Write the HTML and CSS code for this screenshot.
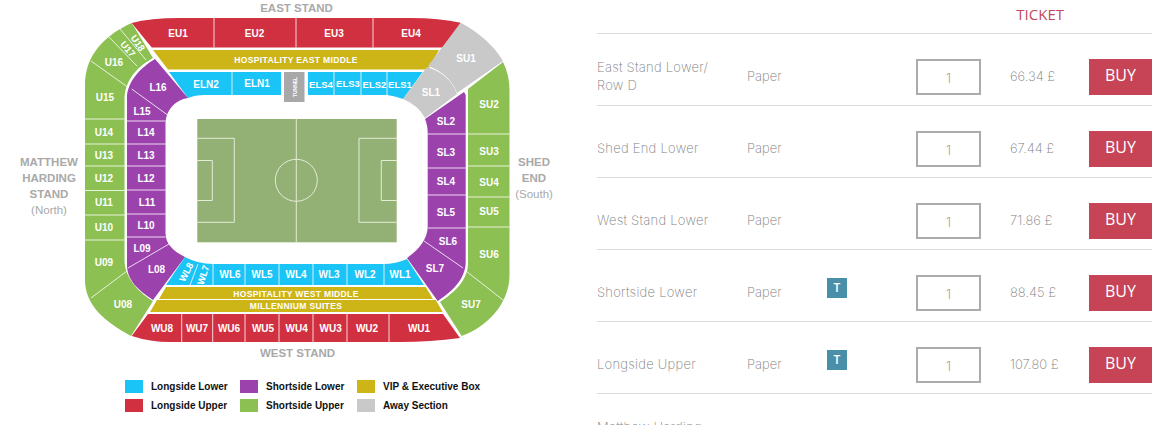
FILE: index.html
```html
<!DOCTYPE html>
<html lang="en">
<head>
<meta charset="utf-8">
<title>Stadium tickets</title>
<link rel="stylesheet" href="styles.css">
</head>
<body>
<div class="page">
  <section class="map-col">
    <svg class="map" width="580" height="375" viewBox="0 0 580 375" xmlns="http://www.w3.org/2000/svg">
      <path class="red" d="M131.7 23Q150 18 180 18L410 18Q440 18 460.7 22.7L443 47.5L151.7 47.5Z"/>
      <path class="gold" d="M153 50L439 50L428 69.5L168 69.5Z"/>
      <path class="blue" d="M169 72L281 72L281 95L205 95Q195 95 188 98Z"/>
      <rect class="tunnel" x="284" y="72" width="20.5" height="30"/>
      <path class="blue" d="M308 72L422.7 72L403 99Q395 96 387 95L308 95Z"/>
      <path class="green" d="M131.7 23C105 35 85 55 85 85L85 280C85 305 105 322 131 336L153 301C135 290 124.5 275 124.5 260L124.5 100C124.5 82 135 68 153 58Z"/>
      <path class="purple" d="M155 59L188 98C175 100 165.5 110 165.5 125L165.5 233C165.5 245 175 252 185 257L153 300C138 290 127 280 127 265L127 98C127 82 140 68 155 59Z"/>
      <path class="grey" d="M460.7 22.7C480 33 495 47 503 61L457 93Q450 74 428 66Z"/>
      <path class="grey" d="M427 67Q450 74 457 94L425 118Q418 105 403 99Z"/>
      <path class="purple" d="M464 92L465.7 95L465.7 262C465.7 280 450 293 437.7 301L407 258C418 250 427.7 240 427.7 226L427.7 134Q427.7 125 425 119Z"/>
      <path class="green" d="M503 62Q509.5 75 509.5 90L509.5 275C509.5 305 485 328 461.7 336L440 302C455 292 468 280 468 263L468 89Z"/>
      <path class="blue" d="M185 257Q198 264 213 264L383 264Q396 264 407 259L424 285L166 285Z"/>
      <path class="gold" d="M166 287L425.7 287L433 299L159 299Z"/>
      <path class="gold" d="M157 300L435.7 300L442.7 312L150 312Z"/>
      <path class="red" d="M148 314L443 314L460 338Q430 342 400 342L170 342Q150 342 131.7 336Z"/>

      <rect class="pitch" x="197.3" y="119" width="199.4" height="123.3"/>
      <g class="lines">
        <path d="M296.3 119V242.3"/>
        <circle cx="296.3" cy="180.3" r="21"/>
        <path d="M197.3 138.3H234.3V222.3H197.3"/>
        <path d="M197.3 160.5H212.3V200.5H197.3"/>
        <path d="M396.7 138.3H359V222.3H396.7"/>
        <path d="M396.7 160.5H381.3V200.5H396.7"/>
      </g>

      <path class="cuts" d="M214 18V47.5M296 18V47.5M373 18V47.5M232 72V95M334 72V95M361 72V95M387 72V95M120 29L146 60M108 36L137 66M91 61L129 88M85 119H124.5M85 144H124.5M85 166H124.5M85 190.5H124.5M85 215H124.5M85 240H124.5M91 298L127 271M131.7 89L169 116M127 121H165.5M127 144H165.5M127 166H165.5M127 190H165.5M127 214H165.5M127 237H165.5M128 268L169 244M427.7 134H465.7M427.7 168H465.7M427.7 195H465.7M427.7 228H465.7M424 241L463 268M468 134H509.5M468 166H509.5M468 197H509.5M468 227H509.5M466 271L503 300M198 264L190 285M213 264V285M245 264V285M279 264V285M313 264V285M347 264V285M384 264V285M181.7 314V342M212.7 314V342M245 314V342M279 314V342M313 314V342M347 314V342M389 314V342"/>

      <g class="seat">
        <text x="178" y="33">EU1</text><text x="254.5" y="33">EU2</text><text x="334" y="33">EU3</text><text x="411" y="33">EU4</text>
        <text x="206" y="84">ELN2</text><text x="257" y="83.5">ELN1</text>
        <text x="321" y="84" class="tight">ELS4</text><text x="348" y="83.5" class="tight">ELS3</text><text x="374.5" y="84" class="tight">ELS2</text><text x="400" y="84" class="tight">ELS1</text>
        <text x="114" y="62">U16</text><text x="105" y="97">U15</text><text x="104" y="132.5">U14</text><text x="104" y="155">U13</text><text x="104" y="178">U12</text><text x="104" y="202">U11</text><text x="104" y="227">U10</text><text x="104" y="262">U09</text><text x="123" y="304">U08</text>
        <text x="128" y="49" transform="rotate(50 128 49)" class="tight">U17</text><text x="138" y="43" transform="rotate(55 138 43)" class="tight">U18</text>
        <text x="158" y="87.5">L16</text><text x="142" y="111">L15</text><text x="146" y="132.5">L14</text><text x="146" y="155">L13</text><text x="146" y="178">L12</text><text x="147" y="202">L11</text><text x="146" y="225">L10</text><text x="142" y="248">L09</text><text x="156.5" y="269">L08</text>
        <text x="431" y="92">SL1</text><text x="446" y="121">SL2</text><text x="446" y="152">SL3</text><text x="446" y="181">SL4</text><text x="446" y="212">SL5</text><text x="448" y="241">SL6</text><text x="435" y="268">SL7</text>
        <text x="466" y="58">SU1</text><text x="489" y="104">SU2</text><text x="489" y="151">SU3</text><text x="489" y="182">SU4</text><text x="489" y="211">SU5</text><text x="489" y="254">SU6</text><text x="471" y="304">SU7</text>
        <text x="186" y="272" transform="rotate(-62 186 272)" class="tight">WL8</text><text x="203" y="275" transform="rotate(-72 203 275)" class="tight">WL7</text>
        <text x="230" y="274">WL6</text><text x="262" y="274">WL5</text><text x="296" y="274">WL4</text><text x="329" y="274">WL3</text><text x="365" y="274">WL2</text><text x="400" y="274">WL1</text>
        <text x="162" y="328.5">WU8</text><text x="197" y="328.5">WU7</text><text x="229" y="328.5">WU6</text><text x="263" y="328.5">WU5</text><text x="296.7" y="328.5">WU4</text><text x="330.7" y="328.5">WU3</text><text x="367" y="328.5">WU2</text><text x="419" y="328.5">WU1</text>
      </g>
      <g class="band">
        <text x="296" y="60">HOSPITALITY EAST MIDDLE</text>
        <text x="296" y="293.5">HOSPITALITY WEST MIDDLE</text>
        <text x="296" y="306">MILLENNIUM SUITES</text>
      </g>
      <text class="tunnel-label" x="294.5" y="87" transform="rotate(-90 294.5 87)">TUNNEL</text>
      <g class="stand">
        <text x="296.5" y="8">EAST STAND</text>
        <text x="297.5" y="353">WEST STAND</text>
        <text x="49" y="162">MATTHEW</text>
        <text x="49" y="178">HARDING</text>
        <text x="49" y="194">STAND</text>
        <text x="49" y="210" class="sub">(North)</text>
        <text x="534" y="162">SHED</text>
        <text x="534" y="178">END</text>
        <text x="534" y="194" class="sub">(South)</text>
      </g>
    </svg>
    <div class="legend">
      <div class="key"><span class="swatch s-blue"></span>Longside Lower</div>
      <div class="key"><span class="swatch s-purple"></span>Shortside Lower</div>
      <div class="key"><span class="swatch s-gold"></span>VIP &amp; Executive Box</div>
      <div class="key"><span class="swatch s-red"></span>Longside Upper</div>
      <div class="key"><span class="swatch s-green"></span>Shortside Upper</div>
      <div class="key"><span class="swatch s-grey"></span>Away Section</div>
    </div>
  </section>

  <section class="tickets">
    <div class="head"><span class="head-title">TICKET</span></div>
    <div class="row">
      <div class="name">East Stand Lower/ Row D</div><div class="type">Paper</div><div></div>
      <div class="qty">1</div><div class="price">66.34 £</div><a class="buy">BUY</a>
    </div>
    <div class="row">
      <div class="name">Shed End Lower</div><div class="type">Paper</div><div></div>
      <div class="qty">1</div><div class="price">67.44 £</div><a class="buy">BUY</a>
    </div>
    <div class="row">
      <div class="name">West Stand Lower</div><div class="type">Paper</div><div></div>
      <div class="qty">1</div><div class="price">71.86 £</div><a class="buy">BUY</a>
    </div>
    <div class="row">
      <div class="name">Shortside Lower</div><div class="type">Paper</div><div><span class="badge">T</span></div>
      <div class="qty">1</div><div class="price">88.45 £</div><a class="buy">BUY</a>
    </div>
    <div class="row">
      <div class="name">Longside Upper</div><div class="type">Paper</div><div><span class="badge">T</span></div>
      <div class="qty">1</div><div class="price">107.80 £</div><a class="buy">BUY</a>
    </div>
    <div class="row">
      <div class="name">Matthew Harding Lower</div>
    </div>
  </section>
</div>
</body>
</html>
```
FILE: styles.css
```css
html, body {
  margin: 0;
  height: 425px;
  overflow: hidden;
  background: #fff;
}
.page {
  display: flex;
  width: 1171px;
  height: 425px;
  overflow: hidden;
}
.map-col {
  flex: 0 0 597px;
  font-family: "Liberation Sans", Arial, sans-serif;
}
.map { display: block; }

.red { fill: #d13040; }
.gold { fill: #cdb417; }
.blue { fill: #1bc4f6; }
.green { fill: #8cc052; }
.purple { fill: #9c42ad; }
.grey { fill: #c9c9c9; }
.tunnel { fill: #a8a8a8; }
.pitch { fill: #94b175; }
.lines path, .lines circle {
  fill: none;
  stroke: #e4ecd6;
  stroke-width: 1;
}
.cuts {
  fill: none;
  stroke: #fff;
  stroke-width: 1;
  opacity: 0.8;
}
.seat text, .band text, .tunnel-label, .stand text {
  text-anchor: middle;
  dominant-baseline: central;
  font-family: "Liberation Sans", Arial, sans-serif;
  font-weight: 700;
}
.seat text { fill: #fff; font-size: 10px; }
.seat .tight { font-size: 9.5px; }
.band text { fill: #fff; font-size: 8.5px; letter-spacing: 0.35px; }
.tunnel-label { fill: #fff; font-size: 5px; }
.stand text { fill: #a9a9a9; font-size: 11.5px; }
.stand .sub { font-weight: 400; font-size: 11.5px; }

.legend {
  display: grid;
  grid-template-columns: 115px 117px auto;
  row-gap: 6px;
  margin: 5px 0 0 125px;
}
.key {
  display: flex;
  align-items: center;
  font-size: 10px;
  font-weight: 700;
  color: #111;
  height: 13px;
}
.swatch {
  flex: 0 0 18px;
  height: 13px;
  margin-right: 8px;
}
.s-blue { background: #1bc4f6; }
.s-purple { background: #9c42ad; }
.s-gold { background: #cdb417; }
.s-red { background: #d13040; }
.s-green { background: #8cc052; }
.s-grey { background: #c9c9c9; }

.tickets {
  width: 555px;
  font-family: Inter, "Liberation Sans", sans-serif;
  font-weight: 200;
  font-size: 13px;
  color: #7e7e7e;
}
.head {
  height: 33px;
  border-bottom: 1px solid #dcdcdc;
  display: flex;
  justify-content: flex-end;
}
.head-title {
  padding-top: 5px;
  margin-right: 88px;
  font-family: "Open Sans", sans-serif;
  font-weight: 400;
  font-size: 15px;
  line-height: 18px;
  color: #c04a5c;
}
.row {
  display: grid;
  grid-template-columns: 150px 80px 89px 94px 79px 63px;
  grid-template-rows: 36px;
  align-items: center;
  height: 36px;
  padding: 25px 0 10px;
  border-bottom: 1px solid #dcdcdc;
}
.name {
  width: 125px;
  line-height: 18px;
  letter-spacing: 0.25px;
}
.name, .type, .price { margin-top: -3px; }
.type, .price { line-height: 18px; }
.price { white-space: nowrap; }
.badge {
  display: block;
  width: 20px;
  height: 20px;
  margin-top: -10px;
  background: #4a8fa9;
  color: #fff;
  font-family: "Open Sans", sans-serif;
  font-weight: 600;
  font-size: 12px;
  line-height: 20px;
  text-align: center;
}
.qty {
  box-sizing: border-box;
  width: 65px;
  height: 36px;
  border: 2px solid #ababab;
  text-align: center;
  line-height: 34px;
}
.buy {
  display: block;
  height: 36px;
  background: #c64456;
  color: #fff;
  font-family: "Open Sans", sans-serif;
  font-weight: 500;
  font-size: 16px;
  line-height: 33px;
  text-align: center;
}
```
